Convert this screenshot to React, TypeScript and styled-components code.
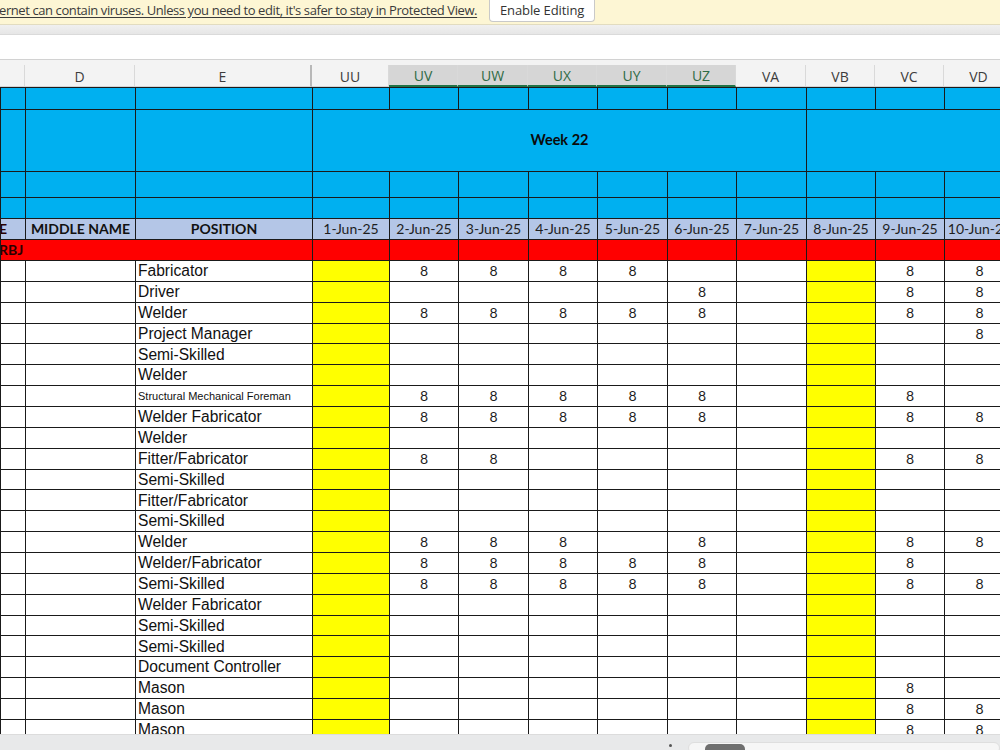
import React from "react";
import styled, { createGlobalStyle } from "styled-components";

const GlobalStyle = createGlobalStyle`
  html, body { margin: 0; padding: 0; background: #ffffff; overflow: hidden; }
  * { box-sizing: border-box; }
`;

const COLS = [25, 110, 177, 77, 69, 70, 69, 70, 69, 70, 69, 69, 70];
const LETTERS = ["", "D", "E", "UU", "UV", "UW", "UX", "UY", "UZ", "VA", "VB", "VC", "VD"];
const SELECTED = new Set([4, 5, 6, 7, 8]);
const TOTAL = COLS.reduce((a, b) => a + b, 0);

type RowData = { pos: string; small?: boolean; days: number[] };

const ROWS: RowData[] = [
  { pos: "Fabricator", days: [2, 3, 4, 5, 9, 10] },
  { pos: "Driver", days: [6, 9, 10] },
  { pos: "Welder", days: [2, 3, 4, 5, 6, 9, 10] },
  { pos: "Project Manager", days: [10] },
  { pos: "Semi-Skilled", days: [] },
  { pos: "Welder", days: [] },
  { pos: "Structural Mechanical Foreman", small: true, days: [2, 3, 4, 5, 6, 9] },
  { pos: "Welder Fabricator", days: [2, 3, 4, 5, 6, 9, 10] },
  { pos: "Welder", days: [] },
  { pos: "Fitter/Fabricator", days: [2, 3, 9, 10] },
  { pos: "Semi-Skilled", days: [] },
  { pos: "Fitter/Fabricator", days: [] },
  { pos: "Semi-Skilled", days: [] },
  { pos: "Welder", days: [2, 3, 4, 6, 9, 10] },
  { pos: "Welder/Fabricator", days: [2, 3, 4, 5, 6, 9] },
  { pos: "Semi-Skilled", days: [2, 3, 4, 5, 6, 9, 10] },
  { pos: "Welder Fabricator", days: [] },
  { pos: "Semi-Skilled", days: [] },
  { pos: "Semi-Skilled", days: [] },
  { pos: "Document Controller", days: [] },
  { pos: "Mason", days: [9] },
  { pos: "Mason", days: [9, 10] },
  { pos: "Mason", days: [9, 10] },
];

const DAYS = [1, 2, 3, 4, 5, 6, 7, 8, 9, 10];

const Frame = styled.div`
  width: 1000px;
  height: 750px;
  overflow: hidden;
  display: flex;
  flex-direction: column;
  background: #ffffff;
`;

const MessageBar = styled.div`
  height: 25px;
  flex: none;
  background: #fdf6d4;
  border-bottom: 1px solid #e2dcc0;
  display: flex;
  align-items: flex-start;
  font-family: "Open Sans", "Noto Sans", sans-serif;
  font-size: 13px;
  color: #3b3b3b;
`;

const MessageText = styled.span`
  text-decoration: underline;
  text-underline-offset: 2px;
  padding-top: 1px;
  letter-spacing: -0.41px;
  white-space: nowrap;
  margin-left: -1px;
`;

const EnableButton = styled.div`
  margin-left: 12px;
  margin-top: -2px;
  width: 106px;
  height: 24px;
  background: #ffffff;
  border: 1px solid #c9c9c9;
  border-top: none;
  border-radius: 0 0 4px 4px;
  display: flex;
  align-items: center;
  justify-content: center;
  font-size: 13px;
  color: #333;
  letter-spacing: -0.1px;
`;

const Band = styled.div`
  height: 10px;
  flex: none;
  background: linear-gradient(#f0f0f0, #e6e6e6);
  border-bottom: 1px solid #dadada;
`;

const FormulaBar = styled.div`
  height: 25px;
  flex: none;
  background: #ffffff;
  border-bottom: 1px solid #d2d2d2;
`;

const Sheet = styled.div`
  flex: 1;
  overflow: hidden;
  display: flex;
  flex-direction: column;
`;

const ColumnHeaders = styled.div`
  height: 27px;
  flex: none;
  display: grid;
  grid-template-columns: ${COLS.map((c) => `${c}px`).join(" ")};
  width: ${TOTAL}px;
  background: #f3f3f3;
  padding-top: 5px;
  font-family: "Open Sans", "Noto Sans", sans-serif;
  font-size: 14px;
`;

const ColHead = styled.div<{ $sel: boolean; $freeze?: boolean }>`
  display: flex;
  align-items: center;
  justify-content: center;
  background: ${(p) => (p.$sel ? "#d6d6d6" : "#f3f3f3")};
  color: ${(p) => (p.$sel ? "#2f6b45" : "#3c3c3c")};
  border-right: ${(p) => (p.$freeze ? "2px solid #b8b8b8" : "1px solid #d9d9d9")};
  border-bottom: ${(p) => (p.$sel ? "2px solid #217346" : "1px solid #d4d4d4")};
  padding-top: 1px;
`;

const Table = styled.table`
  border-collapse: collapse;
  table-layout: fixed;
  width: ${TOTAL}px;
  flex: none;
`;

const Row = styled.tr<{ $h: number }>`
  height: ${(p) => p.$h}px;
`;

const Cell = styled.td<{
  $bg?: string;
  $left?: string;
}>`
  padding: 0;
  border: 1px solid #1a1a1a;
  ${(p) => (p.$left ? `border-left-color: ${p.$left};` : "")}
  background: ${(p) => p.$bg || "#ffffff"};
  font-family: "Lato", "Open Sans", sans-serif;
  font-size: 14px;
  color: #1e1e1e;
  text-align: center;
  vertical-align: middle;
  white-space: nowrap;
  overflow: hidden;
  line-height: 1;
`;

const BoldCell = styled(Cell)`
  font-weight: 700;
  color: #111;
`;

const OverflowLabel = styled(Cell)`
  text-align: left;
  font-weight: 700;
  color: #2a0000;
  text-indent: -2px;
`;

const WeekCell = styled(Cell)`
  font-weight: 700;
  font-size: 14.5px;
  color: #0b0b0b;
`;

const PositionCell = styled(Cell)<{ $small?: boolean }>`
  text-align: left;
  padding-left: 2px;
  font-family: "Liberation Sans", Arial, sans-serif;
  font-size: ${(p) => (p.$small ? "11px" : "15.6px")};
  color: #111;
`;

const BottomBar = styled.div`
  height: 16px;
  flex: none;
  background: #e8e9ea;
  border-top: 1px solid #dcdcdc;
  position: relative;
`;

const Dot = styled.div`
  position: absolute;
  left: 669px;
  top: 9px;
  width: 3px;
  height: 3px;
  border-radius: 50%;
  background: #555;
`;

const ScrollTrack = styled.div`
  position: absolute;
  left: 688px;
  top: 7px;
  width: 312px;
  height: 12px;
  border-radius: 6px;
  background: #f6f6f6;
  border: 1px solid #dedede;
`;

const ScrollThumb = styled.div`
  position: absolute;
  left: 705px;
  top: 9px;
  width: 40px;
  height: 10px;
  border-radius: 5px;
  background: #6f6f6f;
`;

const BLUE = "#00b0f0";
const YELLOW = "#ffff00";
const RED = "#ff0000";
const HEAD = "#b4c6e7";
const GREY = "#8c8c8c";

function blueRow(h: number, key: string) {
  return (
    <Row $h={h} key={key}>
      {COLS.map((_, i) => (
        <Cell key={i} $bg={BLUE} />
      ))}
    </Row>
  );
}

export default function App() {
  return (
    <Frame>
      <GlobalStyle />
      <MessageBar>
        <MessageText>
          ernet can contain viruses. Unless you need to edit, it's safer to stay in Protected View.
        </MessageText>
        <EnableButton>Enable Editing</EnableButton>
      </MessageBar>
      <Band />
      <FormulaBar />
      <Sheet>
        <ColumnHeaders>
          {LETTERS.map((l, i) => (
            <ColHead key={i} $sel={SELECTED.has(i)} $freeze={i === 2}>
              {l}
            </ColHead>
          ))}
        </ColumnHeaders>
        <Table>
          <colgroup>
            {COLS.map((c, i) => (
              <col key={i} style={{ width: c }} />
            ))}
          </colgroup>
          <tbody>
            {blueRow(22, "b1")}
            <Row $h={62}>
              <Cell $bg={BLUE} />
              <Cell $bg={BLUE} />
              <Cell $bg={BLUE} />
              <WeekCell $bg={BLUE} colSpan={7}>
                Week 22
              </WeekCell>
              <Cell $bg={BLUE} colSpan={3} />
            </Row>
            {blueRow(26, "b3")}
            {blueRow(21, "b4")}
            <Row $h={21}>
              <OverflowLabel $bg={HEAD}>E</OverflowLabel>
              <BoldCell $bg={HEAD}>MIDDLE NAME</BoldCell>
              <BoldCell $bg={HEAD}>POSITION</BoldCell>
              {DAYS.map((d) => (
                <Cell key={d} $bg={HEAD}>
                  {d}-Jun-25
                </Cell>
              ))}
            </Row>
            <Row $h={21}>
              <OverflowLabel $bg={RED} colSpan={3}>
                RBJ
              </OverflowLabel>
              {DAYS.map((d) => (
                <Cell key={d} $bg={RED} />
              ))}
            </Row>
            {ROWS.map((r, ri) => (
              <Row $h={20.86} key={ri}>
                <Cell />
                <Cell />
                <PositionCell $small={r.small} $left={GREY}>
                  {r.pos}
                </PositionCell>
                {DAYS.map((d) => {
                  const yellow = d === 1 || d === 8;
                  return (
                    <Cell
                      key={d}
                      $bg={yellow ? YELLOW : undefined}
                      $left={d === 1 || d === 2 ? GREY : undefined}
                    >
                      {r.days.includes(d) ? "8" : ""}
                    </Cell>
                  );
                })}
              </Row>
            ))}
          </tbody>
        </Table>
      </Sheet>
      <BottomBar>
        <Dot />
        <ScrollTrack />
        <ScrollThumb />
      </BottomBar>
    </Frame>
  );
}
